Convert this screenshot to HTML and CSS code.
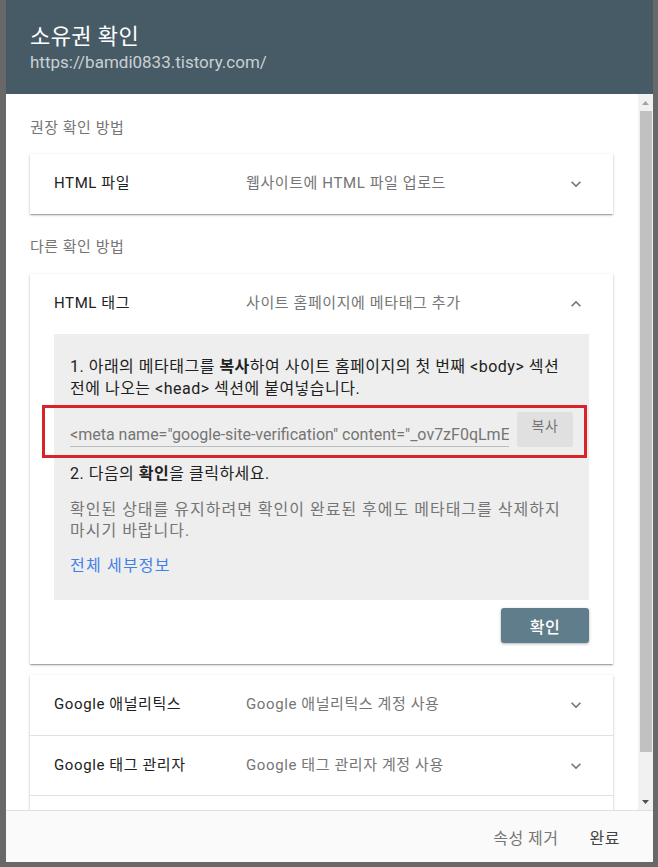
FILE: index.html
```html
<!DOCTYPE html>
<html lang="ko">
<head>
    <meta charset="UTF-8">
    <meta name="viewport" content="width=device-width, initial-scale=1.0">
    <title>소유권 확인</title>
    <link rel="stylesheet" href="styles.css">
</head>
<body>
    <div class="dialog">
        <div class="dialog-header">
            <h2>소유권 확인</h2>
            <div class="site-url">https://bamdi0833.tistory.com/</div>
        </div>

        <div class="dialog-main">
            <div class="dialog-content">
                <div class="section-label">권장 확인 방법</div>
                <div class="card">
                    <div class="method-row">
                        <span class="method-title">HTML 파일</span>
                        <span class="method-desc">웹사이트에 HTML 파일 업로드</span>
                        <svg class="chevron" viewBox="0 0 24 24"><path d="M16.59 8.59L12 13.17 7.41 8.59 6 10l6 6 6-6z"/></svg>
                    </div>
                </div>

                <div class="section-label other">다른 확인 방법</div>
                <div class="card">
                    <div class="method-row">
                        <span class="method-title">HTML 태그</span>
                        <span class="method-desc">사이트 홈페이지에 메타태그 추가</span>
                        <svg class="chevron" viewBox="0 0 24 24"><path d="M12 8l-6 6 1.41 1.41L12 10.83l4.59 4.58L18 14z"/></svg>
                    </div>
                    <div class="method-panel">
                        <p class="step">1. 아래의 메타태그를 <b>복사</b>하여 사이트 홈페이지의 첫 번째 &lt;body&gt; 섹션 전에 나오는 &lt;head&gt; 섹션에 붙여넣습니다.</p>
                        <div class="tag-row">
                            <input class="tag-input" type="text" readonly value='<meta name="google-site-verification" content="_ov7zF0qLmE3kQ9" />'>
                            <button class="copy-btn">복사</button>
                            <div class="highlight"></div>
                        </div>
                        <p class="step step-two">2. 다음의 <b>확인</b>을 클릭하세요.</p>
                        <p class="note">확인된 상태를 유지하려면 확인이 완료된 후에도 메타태그를 삭제하지 마시기 바랍니다.</p>
                        <a class="details-link" href="#">전체 세부정보</a>
                    </div>
                    <div class="panel-actions">
                        <button class="verify-btn">확인</button>
                    </div>
                </div>

                <div class="card card-group">
                    <div class="method-row">
                        <span class="method-title">Google 애널리틱스</span>
                        <span class="method-desc">Google 애널리틱스 계정 사용</span>
                        <svg class="chevron" viewBox="0 0 24 24"><path d="M16.59 8.59L12 13.17 7.41 8.59 6 10l6 6 6-6z"/></svg>
                    </div>
                    <div class="method-row">
                        <span class="method-title">Google 태그 관리자</span>
                        <span class="method-desc">Google 태그 관리자 계정 사용</span>
                        <svg class="chevron" viewBox="0 0 24 24"><path d="M16.59 8.59L12 13.17 7.41 8.59 6 10l6 6 6-6z"/></svg>
                    </div>
                    <div class="method-row"></div>
                </div>
            </div>

            <div class="scrollbar">
                <div class="scroll-btn"><svg viewBox="0 0 7 4"><polygon points="3.5,0 7,4 0,4"/></svg></div>
                <div class="scroll-thumb"></div>
                <div class="scroll-btn down"><svg viewBox="0 0 7 4"><polygon points="0,0 7,0 3.5,4"/></svg></div>
            </div>
        </div>

        <div class="dialog-footer">
            <span class="footer-btn muted">속성 제거</span>
            <span class="footer-btn">완료</span>
        </div>
    </div>
</body>
</html>
```

FILE: styles.css
```css
body {
    margin: 0;
    padding: 0;
    background: #686868;
    font-family: Roboto, "Noto Sans CJK KR", sans-serif;
    color: #212121;
}
.dialog {
    margin-left: 6px;
    width: 647px;
    height: 862px;
    background: #fff;
    display: flex;
    flex-direction: column;
    overflow: hidden;
}
.dialog-header {
    height: 94px;
    box-sizing: border-box;
    padding: 22px 24px 0;
    background: #475b66;
    color: #fff;
}
.dialog-header h2 {
    margin: 0;
    font-size: 22px;
    line-height: 29px;
    font-weight: 400;
    letter-spacing: 0.4px;
}
.site-url {
    font-size: 17px;
    line-height: 22px;
    color: rgba(255, 255, 255, 0.72);
}
.dialog-main {
    flex: 1;
    display: flex;
    min-height: 0;
}
.dialog-content {
    flex: 1;
    overflow: hidden;
    padding: 24px 25px 0 24px;
}
.section-label {
    font-size: 15px;
    line-height: 20px;
    letter-spacing: 0.5px;
    color: #757575;
    margin-bottom: 16px;
}
.section-label.other {
    margin-top: 23px;
    margin-bottom: 17px;
}
.card {
    background: #fff;
    box-shadow: 0 1px 3px rgba(0, 0, 0, 0.2), 0 1px 1px rgba(0, 0, 0, 0.14), 0 2px 1px -1px rgba(0, 0, 0, 0.12);
}
.card-group {
    margin-top: 11px;
}
.method-row {
    display: flex;
    align-items: center;
    height: 60px;
    box-sizing: border-box;
    padding: 0 27px 0 24px;
    font-size: 15px;
    line-height: 20px;
    letter-spacing: 0.6px;
}
.card-group .method-row + .method-row {
    border-top: 1px solid #e0e0e0;
}
.method-title {
    width: 192px;
    flex-shrink: 0;
    margin-top: -2px;
    color: #212121;
}
.method-desc {
    flex: 1;
    margin-top: -2px;
    color: #757575;
}
.chevron {
    width: 20px;
    height: 20px;
    fill: #757575;
}
.method-panel {
    margin: 0 24px;
    background: #eeeeee;
    padding: 22px 16px 23px;
}
.step {
    margin: 0;
    font-size: 16px;
    line-height: 22px;
    letter-spacing: 0.5px;
    color: #212121;
}
.step b {
    font-weight: 700;
}
.tag-row {
    position: relative;
    display: flex;
    align-items: flex-end;
    gap: 8px;
    height: 35px;
    margin-top: 12px;
}
.tag-input {
    flex: 1;
    min-width: 0;
    height: 34px;
    box-sizing: border-box;
    padding: 10px 0 0;
    margin: 0;
    border: none;
    border-bottom: 1px solid #bdbdbd;
    background: transparent;
    font-family: Roboto, "Noto Sans CJK KR", sans-serif;
    font-size: 16px;
    color: #757575;
    outline: none;
}
.copy-btn {
    width: 56px;
    height: 35px;
    align-self: flex-start;
    border: none;
    border-radius: 2px;
    background: #e0e0e0;
    color: #757575;
    font-family: Roboto, "Noto Sans CJK KR", sans-serif;
    font-size: 14px;
    letter-spacing: 0.5px;
    padding: 0 0 10px;
}
.highlight {
    position: absolute;
    left: -28px;
    right: -14px;
    top: -7px;
    bottom: -11px;
    border: 3px solid #d9232b;
    pointer-events: none;
}
.step-two {
    margin-top: 16px;
}
.note {
    margin: 14px 0 0;
    font-size: 16px;
    line-height: 21px;
    letter-spacing: 1px;
    color: #757575;
}
.details-link {
    display: block;
    margin-top: 14px;
    font-size: 16px;
    line-height: 22px;
    letter-spacing: 1.2px;
    color: #4180e8;
    text-decoration: none;
}
.panel-actions {
    display: flex;
    justify-content: flex-end;
    padding: 8px 24px 21px;
}
.verify-btn {
    width: 88px;
    height: 35px;
    border: none;
    border-radius: 3px;
    background: #607d8b;
    color: #fff;
    font-family: Roboto, "Noto Sans CJK KR", sans-serif;
    font-size: 16px;
    font-weight: 500;
    letter-spacing: 0.5px;
    box-shadow: 0 1px 3px rgba(0, 0, 0, 0.3);
}
.scrollbar {
    width: 15px;
    background: #f1f1f1;
    display: flex;
    flex-direction: column;
}
.scroll-btn {
    height: 17px;
    display: flex;
    align-items: center;
    justify-content: center;
}
.scroll-btn svg {
    width: 7px;
    height: 4px;
    fill: #a3a3a3;
}
.scroll-btn.down {
    margin-top: auto;
}
.scroll-btn.down svg {
    fill: #505050;
}
.scroll-thumb {
    height: 641px;
    margin: 0 1px 0 2px;
    background: #c1c1c1;
}
.dialog-footer {
    height: 52px;
    box-sizing: border-box;
    border-top: 1px solid #e0e0e0;
    background: #fafafa;
    display: flex;
    justify-content: flex-end;
    align-items: center;
    gap: 31px;
    padding-right: 33px;
    font-size: 16px;
    letter-spacing: 0.5px;
}
.footer-btn {
    color: #424242;
}
.footer-btn.muted {
    color: #757575;
}
```
